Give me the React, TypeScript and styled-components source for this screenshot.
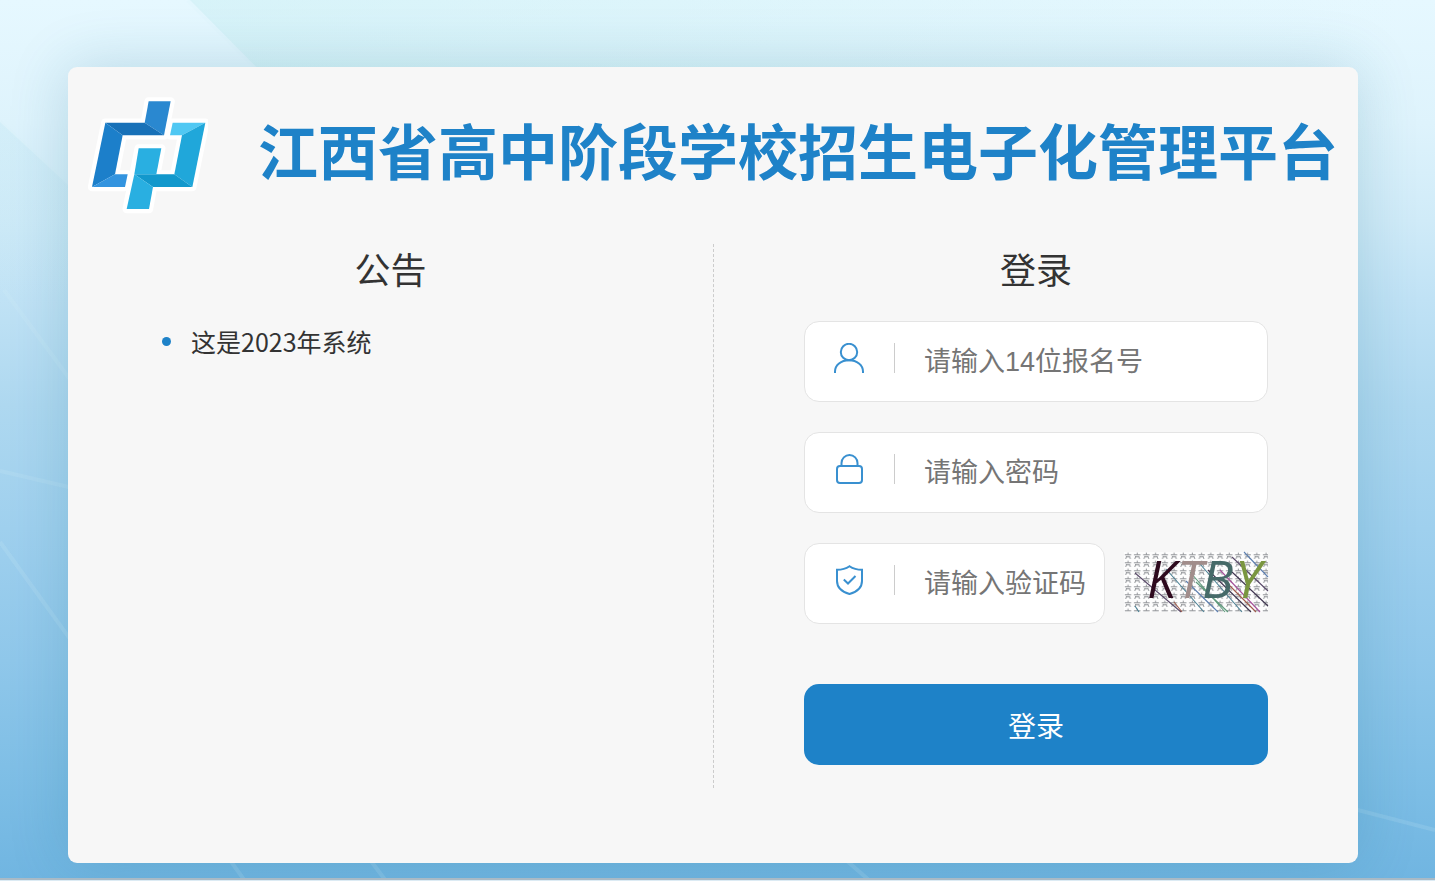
import React from "react";
import styled, { createGlobalStyle } from "styled-components";

const blue = "#1e82c8";
const cjk = '"Noto Sans CJK SC", sans-serif';

const GlobalStyle = createGlobalStyle`
  *, *::before, *::after { box-sizing: border-box; }
  body {
    margin: 0;
    color: #333;
    font-family: ${cjk};
  }
`;

const Page = styled.div`
  display: grid;
  grid-template: minmax(100vh, auto) / minmax(0, 1fr);
`;

const Backdrop = styled.svg`
  grid-area: 1 / 1;
  width: 100%;
  height: 100%;
`;

const Content = styled.div`
  grid-area: 1 / 1;
  z-index: 1;
  display: flex;
  flex-direction: column;
`;

const Main = styled.main`
  flex: 1;
  padding: 67px 77px 15px 68px;
`;

const BottomStrip = styled.footer`
  height: 3px;
  background: #dcebf4;
  border-top: 2px solid #a9bac6;
`;

const Card = styled.section`
  height: 100%;
  padding-bottom: 75px;
  background: #f7f7f7;
  border-radius: 9px;
  box-shadow: 0 0 60px rgba(20, 105, 135, 0.2);
`;

const Header = styled.header`
  display: flex;
  align-items: center;
  gap: 50px;
  padding: 28px 20px 29px;
`;

const Logo = styled.svg`
  flex: none;
  width: 120px;
  height: 120px;
`;

const Title = styled.h1`
  margin: 0;
  padding-bottom: 12px;
  color: ${blue};
  font-size: 60px;
  line-height: 80px;
  font-weight: 700;
  white-space: nowrap;
`;

const Columns = styled.div`
  display: grid;
  grid-template-columns: minmax(0, 1fr) minmax(0, 1fr);
`;

const Column = styled.section<{ $divided?: boolean }>`
  padding: 0 90px 23px;
  border-left: ${(p) => (p.$divided ? "1px dashed #ccc" : "0")};
`;

const Heading = styled.h2`
  margin: 0 0 29px;
  font-size: 36px;
  line-height: 48px;
  font-weight: 400;
  text-align: center;
`;

const NoticeList = styled.ul`
  margin: 0;
  padding: 0;
  list-style: none;
`;

const Notice = styled.li`
  display: flex;
  align-items: center;
  gap: 20px;
  padding-left: 4px;
  font-size: 25px;
  line-height: 40px;

  &::before {
    content: "";
    width: 9px;
    height: 9px;
    border-radius: 50%;
    background: ${blue};
  }
`;

const Form = styled.form`
  display: flex;
  flex-direction: column;
  gap: 30px;
`;

const Field = styled.label<{ $grow?: boolean }>`
  flex: ${(p) => (p.$grow ? "1" : "none")};
  min-width: 0;
  display: flex;
  align-items: flex-start;
  height: 81px;
  padding: 21px 0 0 29px;
  background: #fff;
  border: 1px solid #e4e4e4;
  border-radius: 15px;
`;

const FieldIcon = styled.svg`
  flex: none;
  width: 30px;
  height: 30px;
  margin-right: 30px;
  fill: none;
  stroke: #3990d0;
  stroke-width: 2;
`;

const Input = styled.input`
  flex: 1;
  min-width: 0;
  height: 38px;
  padding: 0 0 0 30px;
  border: 0;
  outline: 0;
  background: linear-gradient(#ccc, #ccc) 0 0 / 1px 30px no-repeat;
  color: #333;
  font-family: "Liberation Sans", ${cjk};
  font-size: 27px;

  &::placeholder {
    color: #757575;
    opacity: 1;
  }
`;

const CodeRow = styled.div`
  display: flex;
  align-items: flex-start;
  gap: 19px;
`;

const CaptchaButton = styled.button`
  flex: none;
  display: block;
  margin-top: 9px;
  padding: 0;
  border: 0;
  background: none;
  cursor: pointer;
`;

const CaptchaImage = styled.svg`
  display: block;
  width: 144px;
  height: 60px;
  overflow: visible;
  font-family: "Open Sans", sans-serif;
  font-size: 52px;
  font-style: italic;
`;

const Submit = styled.button`
  height: 81px;
  margin-top: 30px;
  border: 0;
  border-radius: 15px;
  background: ${blue};
  color: #fff;
  font-family: ${cjk};
  font-size: 28px;
  cursor: pointer;
`;

function Background() {
  return (
    <Backdrop viewBox="0 0 1435 881" preserveAspectRatio="none" aria-hidden="true">
      <defs>
        <linearGradient id="sky" x1="0" y1="0" x2="0" y2="1">
          <stop offset="0" stopColor="#e6f8ff" />
          <stop offset="0.14" stopColor="#def3fc" />
          <stop offset="0.25" stopColor="#d0ebf8" />
          <stop offset="0.34" stopColor="#c0e2f5" />
          <stop offset="0.46" stopColor="#aed8f0" />
          <stop offset="0.6" stopColor="#9fd0ee" />
          <stop offset="0.75" stopColor="#8fc7ea" />
          <stop offset="0.9" stopColor="#7cbde5" />
          <stop offset="1" stopColor="#70b5e1" />
        </linearGradient>
        <linearGradient id="teal" x1="0" y1="0" x2="1" y2="0">
          <stop offset="0" stopColor="#c8eef2" stopOpacity="0.5" />
          <stop offset="1" stopColor="#c8eef2" stopOpacity="0" />
        </linearGradient>
        <linearGradient id="shade" x1="0" y1="0" x2="0" y2="1">
          <stop offset="0" stopColor="#a8dcec" stopOpacity="0.2" />
          <stop offset="1" stopColor="#a8dcec" stopOpacity="0" />
        </linearGradient>
      </defs>
      <rect width="1435" height="881" fill="url(#sky)" />
      <polygon points="190,0 1400,0 1400,180 368,180" fill="url(#teal)" />
      <polygon points="0,122 200,307 0,307" fill="url(#shade)" />
      <g stroke="#d5f0f5" strokeWidth="4" strokeOpacity="0.15">
        <path d="M188 0L368 180" />
        <path d="M0 122L200 307" />
        <path d="M4 290L120 447" />
        <path d="M0 471L120 499" />
        <path d="M0 542L245 881" />
        <path d="M340 820L386 881" />
        <path d="M800 820L870 881" />
        <path d="M1300 795L1435 830" />
      </g>
    </Backdrop>
  );
}

function PlatformLogo() {
  return (
    <Logo viewBox="24 15 360 360" role="img" aria-label="平台标志">
      <g fill="#fff" stroke="#fff" strokeWidth="25" strokeLinejoin="round">
        <path d="M206 34H272L252 136H128L105 253H143L135 291H36L76 98H194Z" />
        <path d="M278 98H376L337 291H219L207 357H140L176 175H244L229 253H283L306 136H270Z" />
      </g>
      <path fill="#2a88d0" d="M206 34H272L252 136L194 98Z" />
      <path fill="#1871b8" d="M76 98H194L252 136H128Z" />
      <path fill="#1c7fca" d="M76 98L128 136L105 253L36 291Z" />
      <path fill="#3394df" d="M105 253H143L135 291H36Z" />
      <path fill="#50c8f3" d="M278 98H376L306 136H270Z" />
      <path fill="#20a7da" d="M376 98L337 291L283 253L306 136Z" />
      <path fill="#1298cc" d="M163 253H283L337 291H219Z" />
      <path fill="#29afe1" d="M176 175H244L229 253H163Z" />
      <path fill="#29afe1" d="M163 253L219 291L207 357H140Z" />
    </Logo>
  );
}

function Captcha() {
  return (
    <CaptchaImage viewBox="0 0 144 60" role="img" aria-label="验证码图片">
      <defs>
        <pattern id="stars" width="9.2" height="8" patternUnits="userSpaceOnUse">
          <path
            d="M4 0.6V2.6M0.8 2.8H7.2M2.6 4L1.6 7M5.4 4L6.4 7M2.6 4.8H5.4"
            fill="none"
            stroke="#777b80"
            strokeWidth="0.8"
          />
        </pattern>
      </defs>
      <rect width="144" height="60" fill="#fdfdfd" />
      <rect width="144" height="60" fill="url(#stars)" />
      <g fill="none" strokeWidth="1.1">
        <path stroke="#5a4a6a" d="M11 21L57 60M108 5L144 39" />
        <path stroke="#4a8094" d="M42 17L80 60M76 12L118 60M11 54L15 60" />
        <path stroke="#5f9a7c" d="M66 20L101 60M72 30L104 60" />
        <path stroke="#a5509a" d="M96 18L136 60" />
        <path stroke="#3f3550" d="M84 18L127 60M108 20L144 54" />
        <path stroke="#5d7fb0" d="M120 0L144 25M62 29L94 60" />
        <path stroke="#a05a4a" d="M98 26L132 60M50 50L58 60" />
      </g>
      <text x="23" y="46" fill="#2e0a1e">K</text>
      <text x="53" y="46" fill="#a18d8b">T</text>
      <text x="78" y="46" fill="#466a68">B</text>
      <text x="111" y="46" fill="#7a9640">Y</text>
    </CaptchaImage>
  );
}

export default function App() {
  return (
    <>
      <GlobalStyle />
      <Page>
        <Background />
        <Content>
          <Main>
            <Card>
              <Header>
                <PlatformLogo />
                <Title>江西省高中阶段学校招生电子化管理平台</Title>
              </Header>
              <Columns>
                <Column>
                  <Heading>公告</Heading>
                  <NoticeList>
                    <Notice>这是2023年系统</Notice>
                  </NoticeList>
                </Column>
                <Column $divided>
                  <Heading>登录</Heading>
                  <Form onSubmit={(e) => e.preventDefault()}>
                    <Field>
                      <FieldIcon viewBox="0 0 30 30" aria-hidden="true">
                        <circle cx="15" cy="9" r="8.2" />
                        <path d="M1 30V28.5C1 22 7 17.2 15 17.2S29 22 29 28.5V30" />
                      </FieldIcon>
                      <Input type="text" placeholder="请输入14位报名号" aria-label="报名号" />
                    </Field>
                    <Field>
                      <FieldIcon viewBox="0 0 30 30" aria-hidden="true">
                        <rect x="3" y="12" width="25" height="17" rx="3" />
                        <path d="M7.5 12V9A8 8 0 0 1 23.5 9V12" />
                      </FieldIcon>
                      <Input type="password" placeholder="请输入密码" aria-label="密码" />
                    </Field>
                    <CodeRow>
                      <Field $grow>
                        <FieldIcon viewBox="0 0 30 30" aria-hidden="true">
                          <path d="M15.5 1.2C12 3.6 7.5 4.8 3 4.8V16C3 22.5 8.5 27 15.5 29C22.5 27 28 22.5 28 16V4.8C23.5 4.8 19 3.6 15.5 1.2Z" />
                          <path d="M9.8 14.5L14 18.5L21.5 11" />
                        </FieldIcon>
                        <Input type="text" placeholder="请输入验证码" aria-label="验证码" />
                      </Field>
                      <CaptchaButton type="button" aria-label="刷新验证码">
                        <Captcha />
                      </CaptchaButton>
                    </CodeRow>
                    <Submit type="submit">登录</Submit>
                  </Form>
                </Column>
              </Columns>
            </Card>
          </Main>
          <BottomStrip />
        </Content>
      </Page>
    </>
  );
}
